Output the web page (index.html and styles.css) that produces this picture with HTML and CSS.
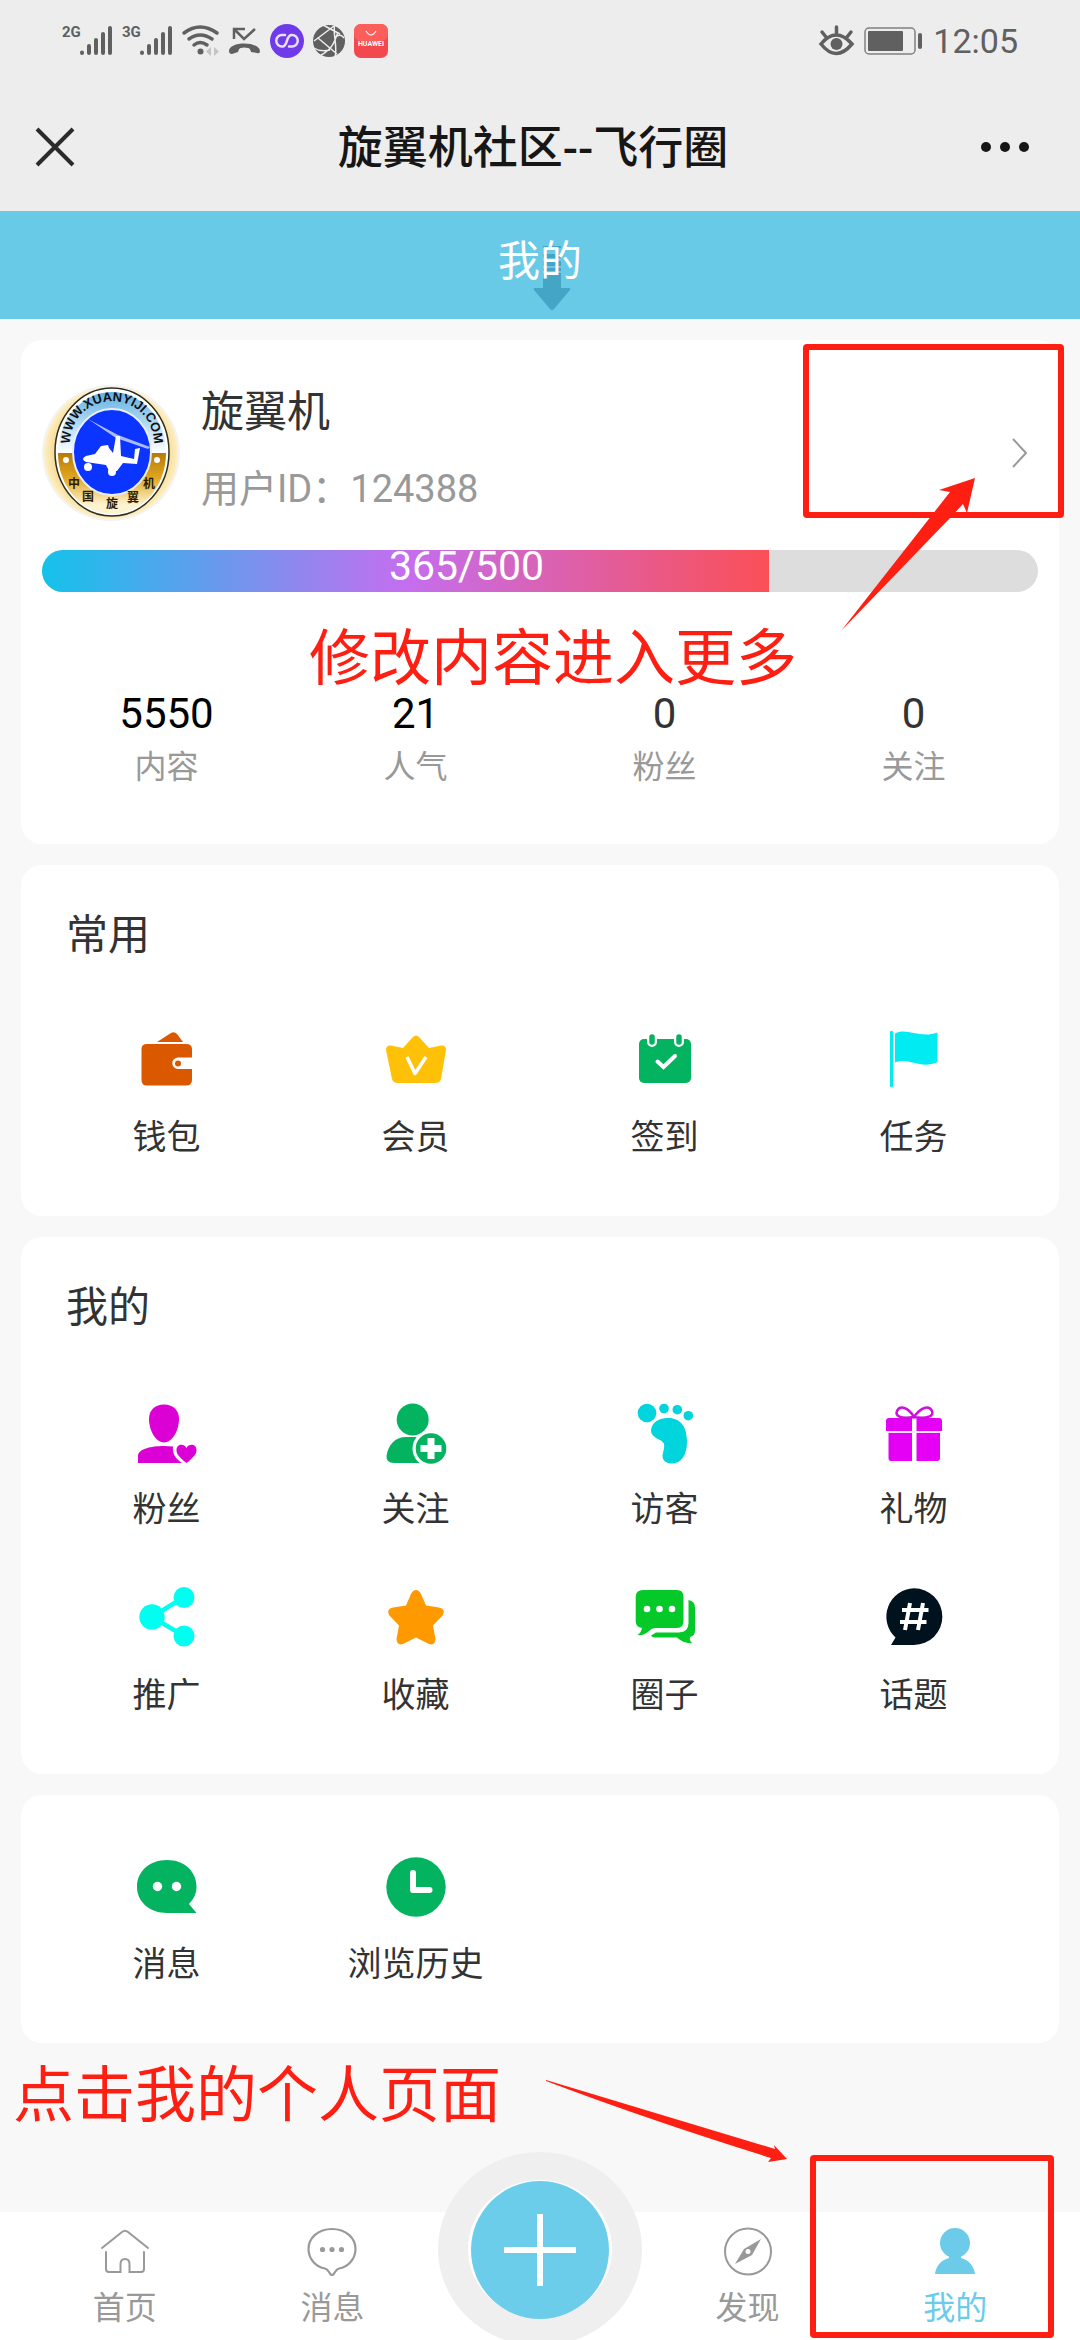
FILE: index.html
```html
<!DOCTYPE html>
<html lang="zh-CN">
<head>
    <meta charset="UTF-8">
    <meta name="viewport" content="width=device-width, initial-scale=1.0">
    <title>旋翼机社区--飞行圈</title>
    <link rel="stylesheet" href="styles.css">
</head>
<body>
<div class="page">

    <!-- phone status bar -->
    <div class="status-bar">
        <div class="status-left">
            <svg width="51" height="34" viewBox="0 0 51 34" fill="#606060">
                <text class="net-text" x="0" y="13">2G</text>
                <g stroke="#606060" stroke-width="4" stroke-linecap="round">
                    <path d="M20 28.5v.5M27 22v7M34 16v13M41 10v19M48 4v25"/>
                </g>
            </svg>
            <svg width="51" height="34" viewBox="0 0 51 34" fill="#606060">
                <text class="net-text" x="0" y="13">3G</text>
                <g stroke="#606060" stroke-width="4" stroke-linecap="round">
                    <path d="M20 28.5v.5M27 22v7M34 16v13M41 10v19M48 4v25"/>
                </g>
            </svg>
            <svg width="37" height="34" viewBox="0 0 37 34" fill="none" stroke="#606060" stroke-width="3.500" stroke-linecap="round">
                <path d="M2 9Q18 -3 35 9M7 15Q18 7 30 15M12 21Q18 16 25 21"/>
                <circle cx="18.500" cy="27.500" r="3" fill="#606060" stroke="none"/>
                <path d="M29 23v9l-5-4.500zM32 23v9l5-4.500z" fill="#c4c4c4" stroke="none"/>
            </svg>
            <svg width="33" height="34" viewBox="0 0 33 34" fill="none">
                <path d="M6 15V5h11M6 5l10 10L27 5" stroke="#606060" stroke-width="2.500"/>
                <path d="M1 27C1 17 31 17 32 27Q32 30 29 29L23 28Q22 24 20 24Q16 23 13 24Q11 24 10 28L4 30Q1 30 1 27Z" fill="#606060"/>
            </svg>
            <svg width="34" height="34" viewBox="0 0 34 34" fill="none">
                <circle cx="17" cy="17" r="17" fill="#6f3bea"/>
                <path d="M15 11H12A5.500 5.500 0 0 0 12 22.500C19 22.500 15 11 22 11A5.500 5.500 0 0 1 22 22.500H19M13 22.500C18 21 16 12 21 11" stroke="#eadfff" stroke-width="2.500" stroke-linecap="round"/>
            </svg>
            <svg width="32" height="34" viewBox="0 0 32 34" fill="none" stroke="#ededed" stroke-width="1.500">
                <circle cx="16" cy="17" r="16" fill="#606060" stroke="none"/>
                <path d="M1 17L21 2M5 14L24 30M22 0C19 8 25 22 22 33M10 1L27 10M25 8C22 16 20 25 8 31M1 24Q7 28 17 26M22 13Q28 9 31 14"/>
            </svg>
            <svg width="34" height="34" viewBox="0 0 34 34">
                <rect width="34" height="34" rx="7" fill="#f4484f"/>
                <rect width="34" height="17" rx="7" fill="#fb5f5c"/>
                <path d="M12 7Q17 15 22 7" fill="none" stroke="#fff" stroke-width="1.200"/>
                <text class="app-text" x="17" y="22" text-anchor="middle">HUAWEI</text>
            </svg>
        </div>
        <div class="status-right">
            <svg width="35" height="34" viewBox="0 0 35 34" fill="none" stroke="#606060" stroke-width="3.500" stroke-linecap="round">
                <path d="M2 20Q17 2 33 20Q17 39 2 20ZM17.500 3v6M3 8l4 5M32 8l-4 5"/>
                <circle cx="17.500" cy="20" r="6" fill="#606060" stroke="none"/>
            </svg>
            <svg width="59" height="28" viewBox="0 0 59 28" fill="#606060">
                <rect x="1" y="1" width="50" height="26" rx="4" fill="none" stroke="#808080" stroke-width="1.500"/>
                <rect x="4" y="4" width="35" height="20" rx="1"/>
                <rect x="54" y="6" width="4" height="16" rx="2"/>
            </svg>
            <span class="clock">12:05</span>
        </div>
    </div>

    <div class="title-bar">
        <button class="icon-btn" aria-label="关闭">
            <svg width="38" height="38" viewBox="0 0 38 38" fill="none" stroke="#2b2b2b" stroke-width="4">
                <path d="M1 1l36 36M37 1L1 37"/>
            </svg>
        </button>
        <div class="title-text">旋翼机社区--飞行圈</div>
        <button class="icon-btn" aria-label="更多">
            <svg width="50" height="12" viewBox="0 0 50 12" fill="#161616">
                <circle cx="6" cy="6" r="5"/>
                <circle cx="25" cy="6" r="5"/>
                <circle cx="44" cy="6" r="5"/>
            </svg>
        </button>
    </div>

    <header class="head">
        <h1>我的
            <svg class="pull-arrow" width="36" height="66" viewBox="0 0 36 66" fill="#45a5c6">
                <path d="M9 1h18v2H9zM9 9h18v4H9zM9 16h18v5H9zM9 23h18v3H9zM9 28h18v15h8q2 0 1 2L20 64q-2 2-4 0L0 45q-1-2 1-2h8z"/>
            </svg>
        </h1>
    </header>

    <main class="content">
        <section class="card user-card">
            <a class="profile" href="#">
                <svg class="avatar" width="138" height="136" viewBox="0 0 138 136">
                    <defs>
                        <clipPath id="avatarClip"><ellipse cx="69" cy="68" rx="67" ry="66"/></clipPath>
                        <linearGradient id="sky" x1="0" y1="0" x2="0" y2="1">
                            <stop offset="0" stop-color="#5fb0e4"/>
                            <stop offset="1" stop-color="#fff"/>
                        </linearGradient>
                        <linearGradient id="gold" x1="0" y1="0" x2="0" y2="1">
                            <stop offset="0" stop-color="#b87a06"/>
                            <stop offset="0.400" stop-color="#e0a520"/>
                            <stop offset="0.850" stop-color="#fdf3d2"/>
                        </linearGradient>
                        <radialGradient id="glow">
                            <stop offset="0.750" stop-color="#f3d27c"/>
                            <stop offset="1" stop-color="#fff3cf"/>
                        </radialGradient>
                        <path id="arcTop" d="M28 65C24 0 116 0 112 65"/>
                    </defs>
                    <ellipse cx="69" cy="68" rx="69" ry="68" fill="#f3f3f3"/>
                    <g clip-path="url(#avatarClip)">
                        <rect width="138" height="136" fill="url(#glow)"/>
                        <ellipse cx="70" cy="67" rx="57" ry="64" fill="#fff" stroke="#2d2d20" stroke-width="1.500"/>
                        <path d="M16 68A54 61 0 0 1 124 68Z" fill="url(#sky)"/>
                        <path d="M16 68A54 61 0 0 0 124 68Z" fill="url(#gold)"/>
                        <ellipse cx="70" cy="67" rx="39" ry="43" fill="#0b34ff" stroke="#e8eefc" stroke-width="2"/>
                        <circle cx="24" cy="75" r="3" fill="#fff"/>
                        <circle cx="115" cy="75" r="3" fill="#fff"/>
                        <path d="M46 34L76 50L108 62L106 64L74 53Z" fill="#a9bcff"/>
                        <path d="M74 51h4l1 20 13 3 1-10 5-1-3 16-14-1-6 8h-8l-3-6-20-3q-6-3 0-6l9-2 6-8 7-1 1 3 4 5z" fill="#fff"/>
                        <circle cx="46" cy="82" r="4" fill="#fff"/>
                        <circle cx="70" cy="87" r="4" fill="#fff"/>
                    </g>
                    <text class="badge-en"><textPath href="#arcTop" startOffset="50%" text-anchor="middle">WWW.XUANYIJI.COM</textPath></text>
                    <text class="badge-cn" x="26 40 64 85 101" y="103 116 123 117 103">中国旋翼机</text>
                </svg>
                <div class="profile-info">
                    <div class="profile-name">旋翼机</div>
                    <div class="profile-id">用户ID：124388</div>
                </div>
                <svg class="chevron" width="16" height="30" viewBox="0 0 16 30" fill="none" stroke="#999" stroke-width="2">
                    <path d="M1 1l13 14L1 29"/>
                </svg>
            </a>

            <div class="level-bar">
                <div class="level-fill" style="width: 73%;">365/500</div>
            </div>

            <div class="stats">
                <a class="stat strong" href="#"><span class="stat-num">5550</span><span class="stat-label">内容</span></a>
                <a class="stat strong" href="#"><span class="stat-num">21</span><span class="stat-label">人气</span></a>
                <a class="stat" href="#"><span class="stat-num">0</span><span class="stat-label">粉丝</span></a>
                <a class="stat" href="#"><span class="stat-num">0</span><span class="stat-label">关注</span></a>
            </div>

            <!-- guide marks -->
            <div class="mark-box mark-box-more"></div>
            <div class="mark-text mark-text-more">修改内容进入更多</div>
            <svg class="mark-arrow mark-arrow-more" width="134" height="154" viewBox="0 0 134 154" fill="#fe1f12">
                <path d="M0 153L109 14L98 12L134 0L126 35L122 26L109 40Z"/>
            </svg>
        </section>

        <section class="card">
            <h2>常用</h2>
            <div class="menu">
                <a class="menu-item" href="#">
                    <svg class="menu-icon" viewBox="0 0 60 60" fill="#da5800">
                        <path d="M20 11L34 2Q37 0 40 3L46 11Z"/>
                        <path d="M10 13H49Q55 13 55 18V26.500H41A5.750 5.750 0 0 0 41 38H55V49Q55 54.500 49 54.500H10Q4.500 54.500 4.500 49V18Q4.500 13 10 13Z"/>
                        <circle cx="41" cy="32.500" r="3"/>
                    </svg>
                    <span>钱包</span>
                </a>
                <a class="menu-item" href="#">
                    <svg class="menu-icon" viewBox="0 0 60 60">
                        <path d="M27 6Q30 3 33 6L43 17L55 14.500Q60 14 60 19L55 48Q54 52 49 52H12Q7 52 6 48L0 19Q0 14 5 14.500L17 17Z" fill="#ffc107"/>
                        <path d="M21 26L29 42.500L40 26" fill="none" stroke="#fff" stroke-width="3.500" stroke-linejoin="round"/>
                    </svg>
                    <span>会员</span>
                </a>
                <a class="menu-item" href="#">
                    <svg class="menu-icon" viewBox="0 0 60 60" fill="none" stroke-linecap="round">
                        <rect x="4" y="8" width="52" height="44" rx="5" fill="#04b35f"/>
                        <path d="M17 7v4M44 7v4" stroke="#fff" stroke-width="10"/>
                        <path d="M17 6v5M44 6v5" stroke="#04b35f" stroke-width="5.500"/>
                        <path d="M22.500 30.500l6 5.500L40 25" stroke="#fff" stroke-width="4"/>
                    </svg>
                    <span>签到</span>
                </a>
                <a class="menu-item" href="#">
                    <svg class="menu-icon" viewBox="0 0 60 60" fill="#00ebf2">
                        <rect x="6" y="0" width="3" height="56" rx="1"/>
                        <path d="M11 2.500C23 -4 35 8 53.500 1.500V31C37 39 25 26 11 31.500Z"/>
                    </svg>
                    <span>任务</span>
                </a>
            </div>
        </section>

        <section class="card">
            <h2>我的</h2>
            <div class="menu">
                <a class="menu-item" href="#">
                    <svg class="menu-icon" viewBox="0 0 60 60" fill="#db00d3">
                        <path d="M27 1.500C37 1.500 42 8 42 16C42 28 35 39.500 27 39.500C19 39.500 12 28 12 16C12 8 17 1.500 27 1.500Z"/>
                        <path d="M1 60V53C1 46 14 43 27 43L36 43.500C35 51 39 56 45 60Z"/>
                        <path d="M49.500 60C42 54 39.500 51 39.500 47C39.500 41 47 40 49.500 45C52 40 59.500 41 59.500 47C59.500 51 57 54 49.500 60Z"/>
                    </svg>
                    <span>粉丝</span>
                </a>
                <a class="menu-item" href="#">
                    <svg class="menu-icon" viewBox="0 0 60 60" fill="#04b35f">
                        <circle cx="26.700" cy="16.500" r="16"/>
                        <path d="M20 34H40V60H8Q0 60 .5 53C2 42 9 34 20 34Z"/>
                        <circle cx="45" cy="45.500" r="18.500" fill="#fff"/>
                        <circle cx="45" cy="45.500" r="15.300"/>
                        <path d="M45 35v21M34.500 45.500h21" stroke="#fff" stroke-width="7"/>
                    </svg>
                    <span>关注</span>
                </a>
                <a class="menu-item" href="#">
                    <svg class="menu-icon" viewBox="0 0 60 60" fill="#00d4dc">
                        <circle cx="12" cy="10" r="9.300"/>
                        <circle cx="29" cy="5.500" r="4.800"/>
                        <circle cx="42.300" cy="6.700" r="4.800"/>
                        <circle cx="53.300" cy="12.700" r="4.800"/>
                        <path d="M33 15C46 15 52 24 52 39C52 52 46 60.500 37 60.500C30 60.500 26 56 28 50C30 42 30 40 25 37C19 34 16 32 16 27C17 19 24 15 33 15Z"/>
                    </svg>
                    <span>访客</span>
                </a>
                <a class="menu-item" href="#">
                    <svg class="menu-icon" viewBox="0 0 60 60" fill="#e500f5">
                        <path d="M5 15H28V28H2V18Q2 15 5 15ZM32.500 15H55Q58 15 58 18V28H32.500ZM4.500 30H28V58H7Q4.500 58 4.500 55ZM32.500 30H56V55Q56 58 53 58H32.500Z"/>
                        <path d="M3 29h54" stroke="#fbc9ff" stroke-width="1"/>
                        <path d="M30 14C24 4 16 2 13 8C11 13 16 16 30 14C44 16 50 13 48 8C45 2 37 4 30 14Z" fill="none" stroke="#cf0fdd" stroke-width="2.500"/>
                    </svg>
                    <span>礼物</span>
                </a>
                <a class="menu-item" href="#">
                    <svg class="menu-icon" viewBox="0 0 60 60" fill="#00fff0">
                        <path d="M47 8L15 28L47 47" fill="none" stroke="#00fff0" stroke-width="4.500"/>
                        <circle cx="15" cy="28" r="12.700"/>
                        <circle cx="47" cy="8.500" r="10.500"/>
                        <circle cx="47" cy="47" r="10.500"/>
                    </svg>
                    <span>推广</span>
                </a>
                <a class="menu-item" href="#">
                    <svg class="menu-icon" viewBox="0 0 60 60" fill="#ff9900">
                        <path d="M30 1Q33 1 35 5L40 16.500L53 18.500Q60 20 57 26L47 36.500L49.500 50Q49 57 43 55L30 48.500L17 55Q11 57 10.500 50L13 36.500L3 26Q0 20 7 18.500L20 16.500L25 5Q27 1 30 1Z"/>
                    </svg>
                    <span>收藏</span>
                </a>
                <a class="menu-item" href="#">
                    <svg class="menu-icon" viewBox="0 0 60 60" fill="#04c928">
                        <path d="M8 1H42Q48.500 1 48.500 8V32Q48.500 39 42 39H20Q17 39 14 42Q9 47 2.500 46Q6 44 7 39Q.7 38 .7 32V8Q.7 1 8 1Z"/>
                        <path d="M53.500 11Q60 12 60 19V41Q60 47 55 48Q54 52 57.500 54Q49 55 42 48.500H20Q17 48.500 16 46.500L21 43.500H44Q53.500 43 53.500 34Z"/>
                        <g fill="#fff">
                            <circle cx="12" cy="20" r="3.300"/>
                            <circle cx="24.500" cy="20" r="3.300"/>
                            <circle cx="37" cy="20" r="3.300"/>
                        </g>
                    </svg>
                    <span>圈子</span>
                </a>
                <a class="menu-item" href="#">
                    <svg class="menu-icon" viewBox="0 0 60 60" fill="#00121e">
                        <path d="M30 -.7A28.350 28.350 0 0 1 30 56H7L11.500 48.500A28.350 28.350 0 0 1 30 -.7Z"/>
                        <path d="M26 14L21 41M39 14L34 41M18 21h26.500M16 33h26.500" stroke="#fff" stroke-width="4"/>
                    </svg>
                    <span>话题</span>
                </a>
            </div>
        </section>

        <section class="card">
            <div class="menu">
                <a class="menu-item" href="#">
                    <svg class="menu-icon" viewBox="0 0 60 60" fill="#04b35f">
                        <path d="M30 55C13 55 0 44 0 29C0 13 13 2 30 2C47 2 59.500 13 59.500 29C59.500 35 57 41 52 46L59.500 55Z"/>
                        <circle cx="20.500" cy="28.500" r="4.700" fill="#fff"/>
                        <circle cx="39.500" cy="28.500" r="4.700" fill="#fff"/>
                    </svg>
                    <span>消息</span>
                </a>
                <a class="menu-item" href="#">
                    <svg class="menu-icon" viewBox="0 0 60 60" fill="#04b35f">
                        <circle cx="30" cy="29" r="29.700"/>
                        <path d="M27 15v17h16.500" fill="none" stroke="#fff" stroke-width="6" stroke-linecap="round" stroke-linejoin="round"/>
                    </svg>
                    <span>浏览历史</span>
                </a>
            </div>
        </section>
    </main>

    <nav class="tab-bar">
        <a class="tab" href="#">
            <svg class="tab-icon" viewBox="0 0 48 48" fill="none" stroke="#999" stroke-width="2" stroke-linecap="round">
                <path d="M1 20L21 4Q24 1.500 27 4L47 20M5 24V41Q5 44 8 44H19.500V36Q19.500 31 24 31Q28.500 31 28.500 36V44H40Q43 44 43 41V24"/>
            </svg>
            <span>首页</span>
        </a>
        <a class="tab" href="#">
            <svg class="tab-icon" viewBox="0 0 48 48" fill="none" stroke="#999" stroke-width="2.200">
                <path d="M24 1C38 1 47.500 10 47.500 21C47.500 31 40 39 31 40.500Q29 41 27 44Q24 50 21 44Q19 41 17 40.500C8 39 .5 31 .5 21C.5 10 10 1 24 1Z"/>
                <g fill="#999" stroke="none">
                    <circle cx="14.500" cy="21.500" r="2.600"/>
                    <circle cx="24" cy="21.500" r="2.600"/>
                    <circle cx="33.500" cy="21.500" r="2.600"/>
                </g>
            </svg>
            <span>消息</span>
        </a>
        <div class="tab">
            <button class="add-btn" aria-label="发布">
                <svg width="204" height="194" viewBox="0 0 204 194">
                    <ellipse cx="102" cy="97" rx="102" ry="97" fill="#efefef"/>
                    <ellipse cx="102" cy="97" rx="72" ry="69" fill="#fff"/>
                    <ellipse cx="102" cy="98" rx="69" ry="69" fill="#6ccdeb"/>
                    <path d="M66 98h72M102 62v72" stroke="#fff" stroke-width="6"/>
                </svg>
            </button>
        </div>
        <a class="tab" href="#">
            <svg class="tab-icon" viewBox="0 0 48 48" fill="none" stroke="#999" stroke-width="2">
                <circle cx="24" cy="23.500" r="23"/>
                <path d="M37 11L28 27L11 36L20 21Z" fill="#999" stroke="none"/>
                <circle cx="24" cy="23.500" r="2.500" fill="#fff" stroke="none"/>
            </svg>
            <span>发现</span>
        </a>
        <a class="tab active" href="#">
            <svg class="tab-icon" viewBox="0 0 48 48" fill="#6ccbe9">
                <circle cx="24" cy="15" r="15"/>
                <path d="M18 28H30V30C38 32 43 38 44 46H4C5 38 10 32 18 30Z"/>
            </svg>
            <span>我的</span>
        </a>

        <div class="mark-box mark-box-mine"></div>
        <div class="mark-text mark-text-mine">点击我的个人页面</div>
        <svg class="mark-arrow mark-arrow-mine" width="242" height="84" viewBox="0 0 242 84" fill="#fe1f12">
            <path d="M0 0L229 69L228 65L241 79L222 82L225 78Q100 39 0 1Z"/>
        </svg>
    </nav>

</div>
</body>
</html>
```

FILE: styles.css
```css
* {
    box-sizing: border-box;
}
body {
    margin: 0;
    font-family: Roboto, "Noto Sans CJK SC", sans-serif;
    color: #333;
    background-color: #f8f8f8;
}
a {
    color: inherit;
    text-decoration: none;
}
button {
    padding: 0;
    border: none;
    background: none;
    cursor: pointer;
}
svg {
    display: block;
    overflow: visible;
}
h1, h2 {
    margin: 0;
    font-size: 42px;
    font-weight: 400;
}
.page {
    display: flex;
    flex-direction: column;
    min-height: 100vh;
    overflow: hidden;
}

/* status bar + title */
.status-bar {
    display: flex;
    justify-content: space-between;
    align-items: center;
    height: 82px;
    padding: 0 62px;
    background-color: #ededed;
}
.status-left {
    display: flex;
    align-items: center;
    gap: 9px;
}
.status-right {
    display: flex;
    align-items: center;
    gap: 10px;
}
.clock {
    font-size: 34px;
    color: #606060;
}
.net-text {
    font-size: 15px;
    font-weight: 700;
}
.app-text {
    font-size: 7px;
    font-weight: 700;
    fill: #fff;
}
.title-bar {
    display: flex;
    align-items: center;
    height: 129px;
    padding: 0 50px 0 36px;
    background-color: #ededed;
}
.title-text {
    flex: 1;
    padding: 0 0 4px 12px;
    font-size: 45px;
    font-weight: 500;
    text-align: center;
    color: #161616;
}
.head {
    height: 108px;
    background-color: #69cae8;
    color: #fff;
    text-align: center;
}
.head h1 {
    position: relative;
    z-index: 0;
    line-height: 102px;
}
.pull-arrow {
    position: absolute;
    z-index: -1;
    top: 34px;
    left: 50%;
    margin-left: -6px;
}

/* cards */
.content {
    display: flex;
    flex-direction: column;
    gap: 21px;
    padding: 21px;
}
.card {
    position: relative;
    padding: 21px 21px 41px;
    border-radius: 21px;
    background-color: #fff;
}
.card h2 {
    padding-left: 24px;
    margin-bottom: 3px;
    line-height: 100px;
}
.user-card {
    padding: 45px 21px 55px;
}
.profile {
    display: flex;
    align-items: center;
    padding-right: 10px;
    margin-bottom: 29px;
}
.profile-info {
    flex: 1;
    display: flex;
    flex-direction: column;
    gap: 29px;
    padding: 0 0 6px 21px;
    line-height: 48px;
}
.profile-name {
    font-size: 43px;
}
.profile-id {
    font-size: 38px;
    color: #999;
}
.badge-en {
    font-family: "Liberation Sans", Arial, sans-serif;
    font-size: 13px;
    font-weight: 700;
    fill: #111;
}
.badge-cn {
    font-size: 12px;
    font-weight: 700;
    fill: #2b1c00;
}
.level-bar {
    height: 42px;
    border-radius: 21px;
    background-color: #ddd;
}
.level-fill {
    height: 100%;
    padding-left: 122px;
    border-radius: 21px 0 0 21px;
    background: linear-gradient(to right, #14c2ea, #c46eef 50%, #fb4f56);
    color: #fff;
    font-size: 41px;
    line-height: 32px;
    text-align: center;
}
.stats {
    display: grid;
    grid-template-columns: repeat(4, 1fr);
    margin-top: 97px;
}
.stat {
    display: flex;
    flex-direction: column;
    align-items: center;
    gap: 6px;
}
.stat-num {
    font-size: 42px;
    line-height: 50px;
}
.strong .stat-num {
    color: #000;
}
.stat-label {
    font-size: 32px;
    line-height: 44px;
    color: #999;
}
.menu {
    display: grid;
    grid-template-columns: repeat(4, 1fr);
}
.menu-item {
    display: flex;
    flex-direction: column;
    align-items: center;
    gap: 20px;
    padding: 42px 0 12px;
    font-size: 34px;
    line-height: 52px;
}
.menu-icon {
    width: 60px;
    height: 60px;
}

/* bottom tabs */
.tab-bar {
    position: relative;
    display: grid;
    grid-template-columns: repeat(5, 1fr);
    height: 128px;
    margin-top: auto;
    padding: 0 21px;
    background-color: #fff;
}
.tab {
    position: relative;
    display: flex;
    flex-direction: column;
    align-items: center;
    gap: 10px;
    padding-top: 16px;
    font-size: 32px;
    line-height: 44px;
    color: #999;
}
.tab.active {
    color: #6ccbe9;
}
.tab-icon {
    width: 48px;
    height: 48px;
}
.add-btn {
    position: absolute;
    top: -60px;
}

/* red guide marks */
.mark-box {
    position: absolute;
    border: 6px solid #fe1f12;
    border-radius: 4px;
    pointer-events: none;
}
.mark-text {
    position: absolute;
    font-size: 61px;
    line-height: 60px;
    color: #fe1f12;
    white-space: nowrap;
}
.mark-arrow {
    position: absolute;
    pointer-events: none;
}
.mark-box-more {
    top: 4px;
    right: -5px;
    width: 261px;
    height: 174px;
}
.mark-text-more {
    top: 289px;
    left: 288px;
}
.mark-arrow-more {
    top: 138px;
    right: 84px;
}
.mark-box-mine {
    top: -57px;
    right: 26px;
    width: 244px;
    height: 183px;
}
.mark-text-mine {
    top: -146px;
    left: 13px;
}
.mark-arrow-mine {
    top: -132px;
    right: 292px;
}
```
